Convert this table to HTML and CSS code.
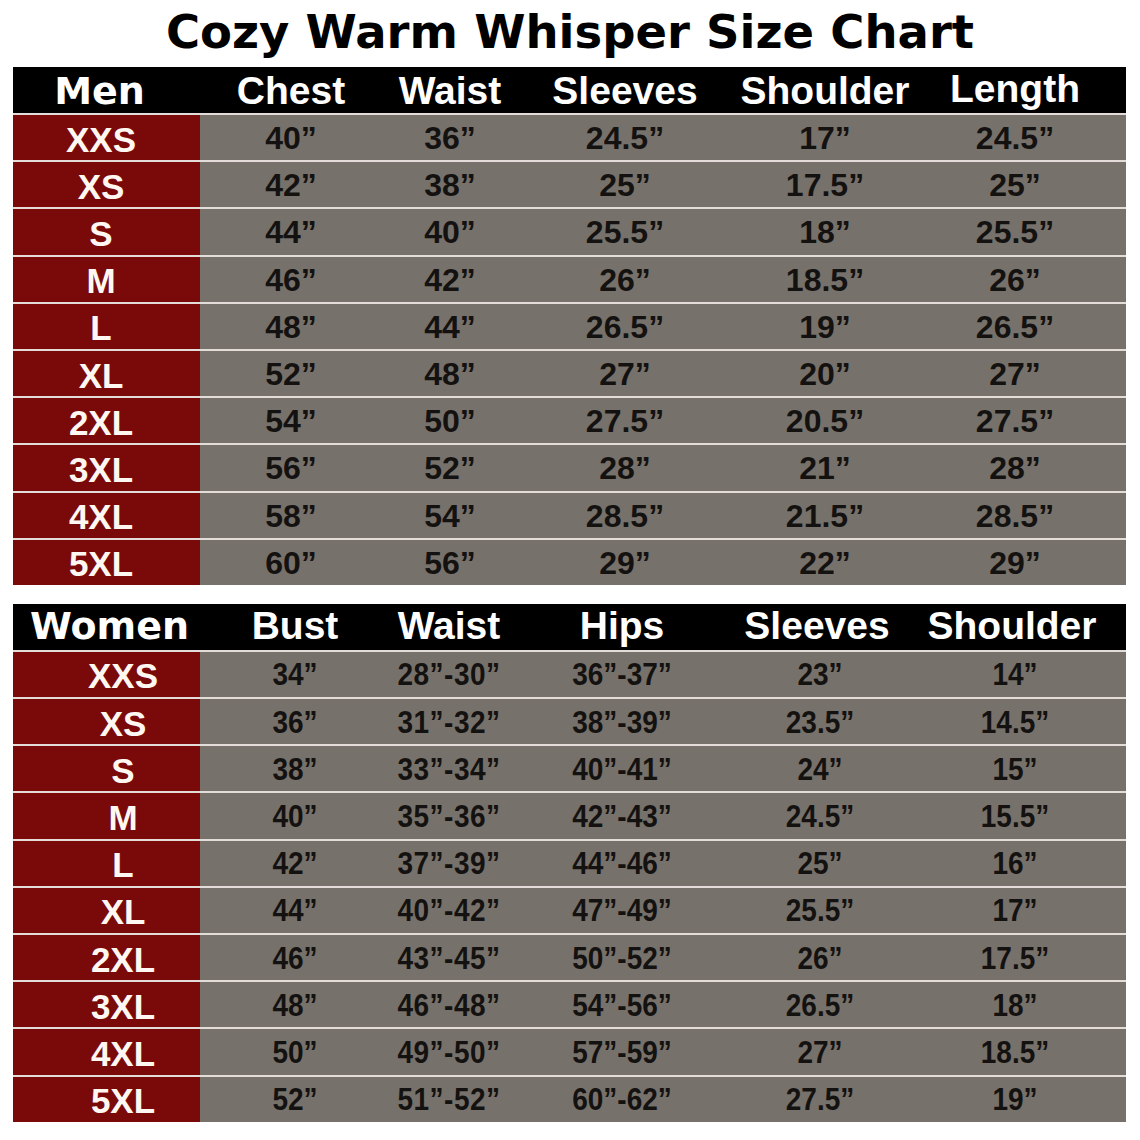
FILE: index.html
```html
<!DOCTYPE html>
<html>
<head>
<meta charset="utf-8">
<link rel="stylesheet" href="styles.css">
</head>
<body>
<h1 class="title">Cozy Warm Whisper Size Chart</h1>

<div class="chart men">
  <div class="row head">
    <div class="c c1 h-first">Men</div>
    <div class="c c2">Chest</div>
    <div class="c c3">Waist</div>
    <div class="c c4">Sleeves</div>
    <div class="c c5">Shoulder</div>
    <div class="c c6">Length</div>
  </div>
  <div class="row"><div class="c c1 lbl"><span>XXS</span></div><div class="c c2"><span>40”</span></div><div class="c c3"><span>36”</span></div><div class="c c4"><span>24.5”</span></div><div class="c c5"><span>17”</span></div><div class="c c6"><span>24.5”</span></div></div>
  <div class="row"><div class="c c1 lbl"><span>XS</span></div><div class="c c2"><span>42”</span></div><div class="c c3"><span>38”</span></div><div class="c c4"><span>25”</span></div><div class="c c5"><span>17.5”</span></div><div class="c c6"><span>25”</span></div></div>
  <div class="row"><div class="c c1 lbl"><span>S</span></div><div class="c c2"><span>44”</span></div><div class="c c3"><span>40”</span></div><div class="c c4"><span>25.5”</span></div><div class="c c5"><span>18”</span></div><div class="c c6"><span>25.5”</span></div></div>
  <div class="row"><div class="c c1 lbl"><span>M</span></div><div class="c c2"><span>46”</span></div><div class="c c3"><span>42”</span></div><div class="c c4"><span>26”</span></div><div class="c c5"><span>18.5”</span></div><div class="c c6"><span>26”</span></div></div>
  <div class="row"><div class="c c1 lbl"><span>L</span></div><div class="c c2"><span>48”</span></div><div class="c c3"><span>44”</span></div><div class="c c4"><span>26.5”</span></div><div class="c c5"><span>19”</span></div><div class="c c6"><span>26.5”</span></div></div>
  <div class="row"><div class="c c1 lbl"><span>XL</span></div><div class="c c2"><span>52”</span></div><div class="c c3"><span>48”</span></div><div class="c c4"><span>27”</span></div><div class="c c5"><span>20”</span></div><div class="c c6"><span>27”</span></div></div>
  <div class="row"><div class="c c1 lbl"><span>2XL</span></div><div class="c c2"><span>54”</span></div><div class="c c3"><span>50”</span></div><div class="c c4"><span>27.5”</span></div><div class="c c5"><span>20.5”</span></div><div class="c c6"><span>27.5”</span></div></div>
  <div class="row"><div class="c c1 lbl"><span>3XL</span></div><div class="c c2"><span>56”</span></div><div class="c c3"><span>52”</span></div><div class="c c4"><span>28”</span></div><div class="c c5"><span>21”</span></div><div class="c c6"><span>28”</span></div></div>
  <div class="row"><div class="c c1 lbl"><span>4XL</span></div><div class="c c2"><span>58”</span></div><div class="c c3"><span>54”</span></div><div class="c c4"><span>28.5”</span></div><div class="c c5"><span>21.5”</span></div><div class="c c6"><span>28.5”</span></div></div>
  <div class="row"><div class="c c1 lbl"><span>5XL</span></div><div class="c c2"><span>60”</span></div><div class="c c3"><span>56”</span></div><div class="c c4"><span>29”</span></div><div class="c c5"><span>22”</span></div><div class="c c6"><span>29”</span></div></div>
</div>

<div class="chart women">
  <div class="row head">
    <div class="c c1 h-first">Women</div>
    <div class="c c2">Bust</div>
    <div class="c c3">Waist</div>
    <div class="c c4">Hips</div>
    <div class="c c5">Sleeves</div>
    <div class="c c6">Shoulder</div>
  </div>
  <div class="row"><div class="c c1 lbl"><span>XXS</span></div><div class="c c2"><span>34”</span></div><div class="c c3"><span>28”-30”</span></div><div class="c c4"><span>36”-37”</span></div><div class="c c5"><span>23”</span></div><div class="c c6"><span>14”</span></div></div>
  <div class="row"><div class="c c1 lbl"><span>XS</span></div><div class="c c2"><span>36”</span></div><div class="c c3"><span>31”-32”</span></div><div class="c c4"><span>38”-39”</span></div><div class="c c5"><span>23.5”</span></div><div class="c c6"><span>14.5”</span></div></div>
  <div class="row"><div class="c c1 lbl"><span>S</span></div><div class="c c2"><span>38”</span></div><div class="c c3"><span>33”-34”</span></div><div class="c c4"><span>40”-41”</span></div><div class="c c5"><span>24”</span></div><div class="c c6"><span>15”</span></div></div>
  <div class="row"><div class="c c1 lbl"><span>M</span></div><div class="c c2"><span>40”</span></div><div class="c c3"><span>35”-36”</span></div><div class="c c4"><span>42”-43”</span></div><div class="c c5"><span>24.5”</span></div><div class="c c6"><span>15.5”</span></div></div>
  <div class="row"><div class="c c1 lbl"><span>L</span></div><div class="c c2"><span>42”</span></div><div class="c c3"><span>37”-39”</span></div><div class="c c4"><span>44”-46”</span></div><div class="c c5"><span>25”</span></div><div class="c c6"><span>16”</span></div></div>
  <div class="row"><div class="c c1 lbl"><span>XL</span></div><div class="c c2"><span>44”</span></div><div class="c c3"><span>40”-42”</span></div><div class="c c4"><span>47”-49”</span></div><div class="c c5"><span>25.5”</span></div><div class="c c6"><span>17”</span></div></div>
  <div class="row"><div class="c c1 lbl"><span>2XL</span></div><div class="c c2"><span>46”</span></div><div class="c c3"><span>43”-45”</span></div><div class="c c4"><span>50”-52”</span></div><div class="c c5"><span>26”</span></div><div class="c c6"><span>17.5”</span></div></div>
  <div class="row"><div class="c c1 lbl"><span>3XL</span></div><div class="c c2"><span>48”</span></div><div class="c c3"><span>46”-48”</span></div><div class="c c4"><span>54”-56”</span></div><div class="c c5"><span>26.5”</span></div><div class="c c6"><span>18”</span></div></div>
  <div class="row"><div class="c c1 lbl"><span>4XL</span></div><div class="c c2"><span>50”</span></div><div class="c c3"><span>49”-50”</span></div><div class="c c4"><span>57”-59”</span></div><div class="c c5"><span>27”</span></div><div class="c c6"><span>18.5”</span></div></div>
  <div class="row"><div class="c c1 lbl"><span>5XL</span></div><div class="c c2"><span>52”</span></div><div class="c c3"><span>51”-52”</span></div><div class="c c4"><span>60”-62”</span></div><div class="c c5"><span>27.5”</span></div><div class="c c6"><span>19”</span></div></div>
</div>
</body>
</html>
```
FILE: styles.css
```css
html, body {
  margin: 0;
  padding: 0;
  background: #ffffff;
}

.title {
  margin: 0 0 8px 0;
  padding-top: 5px;
  height: 54px;
  line-height: 54px;
  text-align: center;
  font-family: "DejaVu Sans", sans-serif;
  font-weight: bold;
  font-size: 46.5px;
  color: #000;
}

.chart {
  margin: 0 14px 0 13px;
  font-family: "Liberation Sans", Arial, sans-serif;
  font-weight: bold;
}

.men {
  margin-bottom: 19px;
}

.row {
  display: grid;
  height: 45.2px;
  border-top: 2px solid #e4dcd8;
  background: #77716b;
}

.men .row {
  grid-template-columns: 187px 182px 136px 214px 186px 208px;
}

.women .row {
  grid-template-columns: 187px 190px 118px 228px 168px 222px;
}

.row.head {
  height: 46px;
  border-top: none;
  background: #000;
  color: #fff;
  font-size: 39px;
}

.c {
  display: flex;
  align-items: center;
  justify-content: center;
  white-space: nowrap;
}

.head .c {
  padding-bottom: 4px;
}

.men .head .c6 {
  padding-bottom: 8px;
  padding-right: 14px;
}

.h-first {
  font-family: "DejaVu Sans", sans-serif;
  font-size: 38px;
}

.men .h-first {
  padding-right: 14px;
}

.women .h-first {
  padding-right: 0;
  padding-left: 6px;
}

.women .head .c5 {
  padding-right: 6px;
}

.women .head .c6 {
  padding-right: 6px;
}

.lbl {
  background: #7a0a0a;
  color: #fff8f2;
  font-size: 35px;
  padding-top: 4px;
}

.men .lbl {
  padding-right: 11px;
}

.women .lbl {
  padding-left: 33px;
}

.row:not(.head) .c:not(.lbl) {
  color: #141210;
}

.men .row:not(.head) .c:not(.lbl) {
  font-size: 32px;
  padding-top: 2px;
}

.men .row:not(.head) .c6 {
  padding-right: 14px;
}

.women .row:not(.head) .c:not(.lbl) {
  font-size: 28px;
  padding-top: 2px;
}

.women .row:not(.head) .c:not(.lbl) span {
  display: inline-block;
  transform: scaleY(1.12);
}

.women .row:not(.head) .c3 span {
  letter-spacing: 0.5px;
}
```
